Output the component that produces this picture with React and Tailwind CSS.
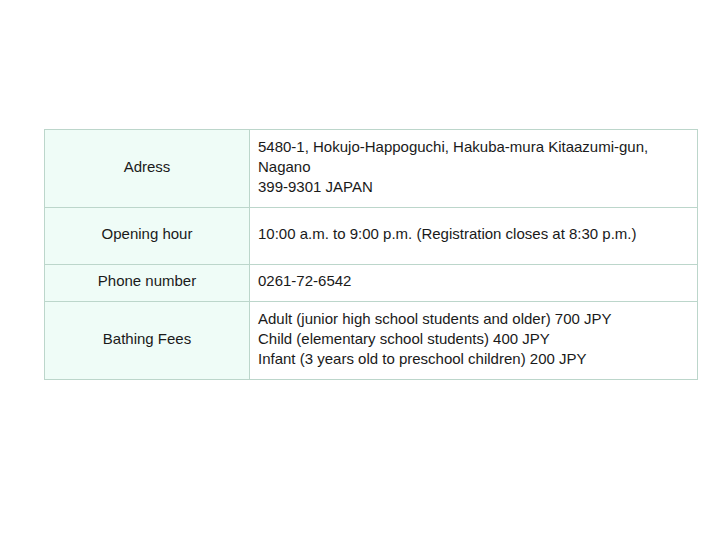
import React from 'react'

const rows = [
  {
    label: 'Adress',
    lines: ['5480-1, Hokujo-Happoguchi, Hakuba-mura Kitaazumi-gun,', 'Nagano', '399-9301 JAPAN'],
    h: 'h-[78px]',
  },
  {
    label: 'Opening hour',
    lines: ['10:00 a.m. to 9:00 p.m. (Registration closes at 8:30 p.m.)'],
    h: 'h-[57px]',
  },
  {
    label: 'Phone number',
    lines: ['0261-72-6542'],
    h: 'h-[37px]',
  },
  {
    label: 'Bathing Fees',
    lines: [
      'Adult (junior high school students and older) 700 JPY',
      'Child (elementary school students) 400 JPY',
      'Infant (3 years old to preschool children) 200 JPY',
    ],
    h: 'h-[78px]',
  },
]

export default function App() {
  return (
    <div className="w-[720px] h-[540px] bg-white pt-[129px] pl-[44px] font-['Liberation_Sans',Arial,sans-serif] text-[15px] leading-[20px] text-[#1a1a1a]">
      <table className="w-[654px] border-collapse border border-[#bcd6cb]">
        <tbody>
          {rows.map((r) => (
            <tr key={r.label} className={r.h}>
              <td className="w-[205px] border border-[#bcd6cb] bg-[#effcf7] text-center align-middle px-2 pb-[4px]">
                {r.label}
              </td>
              <td className="border border-[#bcd6cb] bg-white align-middle px-2 pb-[4px]">
                {r.lines.map((l) => (
                  <div key={l}>{l}</div>
                ))}
              </td>
            </tr>
          ))}
        </tbody>
      </table>
    </div>
  )
}
